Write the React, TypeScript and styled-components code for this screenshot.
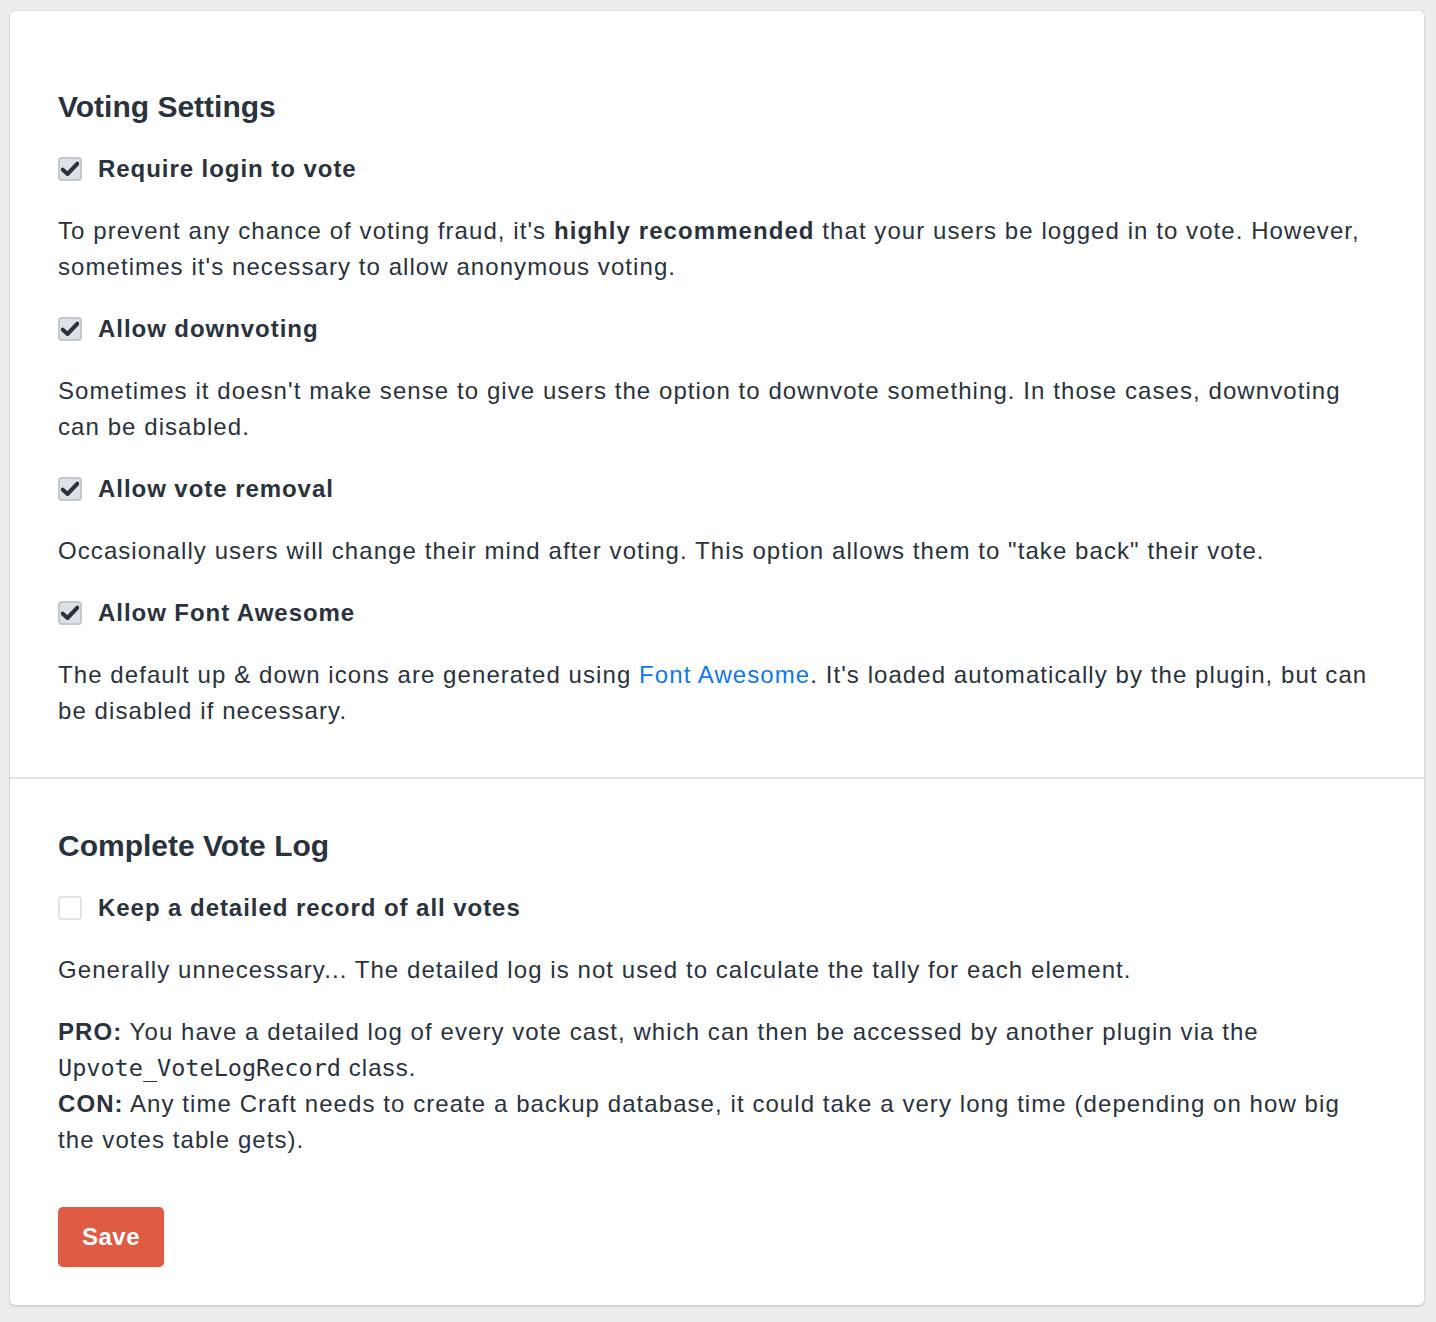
import React from 'react';
import styled, { createGlobalStyle } from 'styled-components';

const GlobalStyle = createGlobalStyle`
    body {
        margin: 0;
        padding: 11px 12px 16px 10px;
        background: #ebedef;
        font-family: 'Liberation Sans', Arial, sans-serif;
        color: #29323d;
    }
`;

const Card = styled.div`
    background: #fff;
    border-radius: 5px;
    box-shadow: 0 0 0 1px rgba(0, 0, 20, 0.06), 0 2px 3px rgba(0, 0, 20, 0.1);
`;

const Section = styled.div<{ $top: number; $bottom: number; $divider?: boolean }>`
    padding: ${(p) => p.$top}px 48px ${(p) => p.$bottom}px;
    border-top: ${(p) => (p.$divider ? '2px solid #e3e5e8' : 'none')};
`;

const Heading = styled.h2`
    margin: 0 0 26px;
    font-size: 30px;
    line-height: 36px;
    font-weight: bold;
`;

const Field = styled.div`
    margin-bottom: 26px;
`;

const Label = styled.label`
    display: flex;
    align-items: center;
    gap: 16px;
    font-size: 24px;
    line-height: 36px;
    font-weight: bold;
    letter-spacing: 0.95px;
    margin-bottom: 26px;
`;

const Box = styled.span<{ $checked: boolean }>`
    box-sizing: border-box;
    width: 24px;
    height: 24px;
    border-radius: 4px;
    border: 2px solid ${(p) => (p.$checked ? '#c3c8ce' : '#dfe2e6')};
    background: ${(p) => (p.$checked ? '#dde1e6' : '#fff')};
    display: flex;
    align-items: center;
    justify-content: center;
`;

const Text = styled.p`
    margin: 0;
    font-size: 24px;
    line-height: 36px;
    letter-spacing: 1.07px;
    & + & {
        margin-top: 26px;
    }
`;

const Link = styled.a`
    color: #0d78f2;
    text-decoration: none;
`;

const Code = styled.code`
    font-family: 'DejaVu Sans Mono', monospace;
    font-size: 23.5px;
    letter-spacing: 0;
`;

const SaveButton = styled.button`
    margin-top: 49px;
    height: 60px;
    padding: 0 24px;
    border: none;
    border-radius: 5px;
    background: #df5b43;
    color: #fff;
    font-family: 'Liberation Sans', Arial, sans-serif;
    font-size: 24px;
    font-weight: bold;
    letter-spacing: 0.5px;
    box-shadow: 0 1px 2px rgba(0, 0, 0, 0.1);
`;

function Check({ checked, children }: { checked: boolean; children: React.ReactNode }): JSX.Element {
    return (
        <Label>
            <Box $checked={checked}>
                {checked && (
                    <svg width="18" height="16" viewBox="0 0 18 16">
                        <path d="M1.5 8.5 L6.5 13 L16.5 2.5" fill="none" stroke="#29323d" strokeWidth="4" strokeLinecap="round" strokeLinejoin="round" />
                    </svg>
                )}
            </Box>
            {children}
        </Label>
    );
}

function App(): JSX.Element {
    return (
        <>
            <GlobalStyle />
            <Card>
                <Section $top={78} $bottom={22}>
                    <Heading>Voting Settings</Heading>
                    <Field>
                        <Check checked>Require login to vote</Check>
                        <Text>
                            To prevent any chance of voting fraud, it's <b>highly recommended</b> that your users be
                            logged in to vote. However, sometimes it's necessary to allow anonymous voting.
                        </Text>
                    </Field>
                    <Field>
                        <Check checked>Allow downvoting</Check>
                        <Text>
                            Sometimes it doesn't make sense to give users the option to downvote something. In those
                            cases, downvoting can be disabled.
                        </Text>
                    </Field>
                    <Field>
                        <Check checked>Allow vote removal</Check>
                        <Text>
                            Occasionally users will change their mind after voting. This option allows them to "take
                            back" their vote.
                        </Text>
                    </Field>
                    <Field>
                        <Check checked>Allow Font Awesome</Check>
                        <Text>
                            The default up &amp; down icons are generated using <Link href="#">Font Awesome</Link>.
                            It's loaded automatically by the plugin, but can be disabled if necessary.
                        </Text>
                    </Field>
                </Section>
                <Section $top={49} $bottom={38} $divider>
                    <Heading>Complete Vote Log</Heading>
                    <Check checked={false}>Keep a detailed record of all votes</Check>
                    <Text>Generally unnecessary... The detailed log is not used to calculate the tally for each element.</Text>
                    <Text>
                        <b>PRO:</b> You have a detailed log of every vote cast, which can then be accessed by another
                        plugin via the <Code>Upvote_VoteLogRecord</Code> class.
                        <br />
                        <b>CON:</b> Any time Craft needs to create a backup database, it could take a very long time
                        (depending on how big the votes table gets).
                    </Text>
                    <SaveButton>Save</SaveButton>
                </Section>
            </Card>
        </>
    );
}

export default App;
